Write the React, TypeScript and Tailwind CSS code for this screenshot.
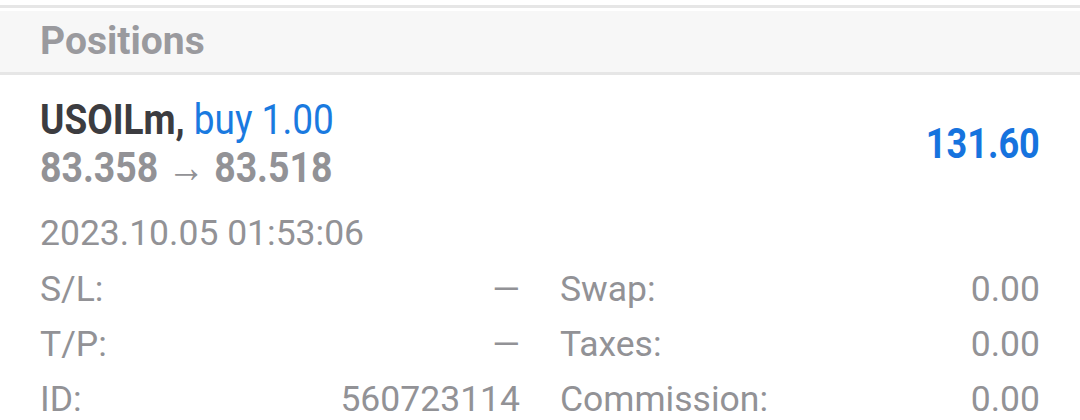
import React from 'react'

const rows = [
  { left: 'S/L:', leftValue: '—', right: 'Swap:', rightValue: '0.00' },
  { left: 'T/P:', leftValue: '—', right: 'Taxes:', rightValue: '0.00' },
  { left: 'ID:', leftValue: '560723114', right: 'Commission:', rightValue: '0.00' },
]

function Cell({ label, value }: { label: string; value: string }) {
  return (
    <div className="flex h-[55px] items-center justify-between">
      <span>{label}</span>
      <span>{value}</span>
    </div>
  )
}

export default function App() {
  return (
    <div
      className="h-[420px] w-[1080px] overflow-hidden bg-white"
      style={{ fontFamily: 'Roboto, "Liberation Sans", sans-serif' }}
    >
      <div className="h-[5px] bg-white" />
      <div className="h-[3px] bg-[#e6e6e6]" />
      <div className="h-[3px] bg-white" />
      <div className="flex h-[64px] items-center border-b-[3px] border-[#e6e6e6] bg-[#f7f7f7] px-10">
        <h2 className="text-[39px] font-bold text-[#9a9a9e]">Positions</h2>
      </div>

      <div className="px-10">
        <div className="flex items-center justify-between pt-[20px]">
          <div className="flex flex-col">
            <div className="h-[48px] origin-left scale-x-[0.86] whitespace-nowrap text-[43px] leading-[48px] font-bold">
              <span className="text-[#3c3c40]">USOILm, </span>
              <span className="font-normal text-[#1a7ae0]">buy 1.00</span>
            </div>
            <div className="h-[48px] origin-left scale-x-[0.87] whitespace-nowrap text-[43px] leading-[48px] font-bold text-[#929296]">
              83.358 <span className="font-normal">→</span> 83.518
            </div>
          </div>
          <div className="origin-right scale-x-[0.84] text-[43px] font-bold text-[#1673de]">131.60</div>
        </div>

        <div className="pt-[22px] text-[35.5px] leading-[40px] text-[#929296]">2023.10.05 01:53:06</div>

        <div className="grid grid-cols-2 gap-x-10 pt-[9px] text-[35.5px] text-[#929296]">
          {rows.map(row => (
            <React.Fragment key={row.left}>
              <Cell label={row.left} value={row.leftValue} />
              <Cell label={row.right} value={row.rightValue} />
            </React.Fragment>
          ))}
        </div>
      </div>
    </div>
  )
}
